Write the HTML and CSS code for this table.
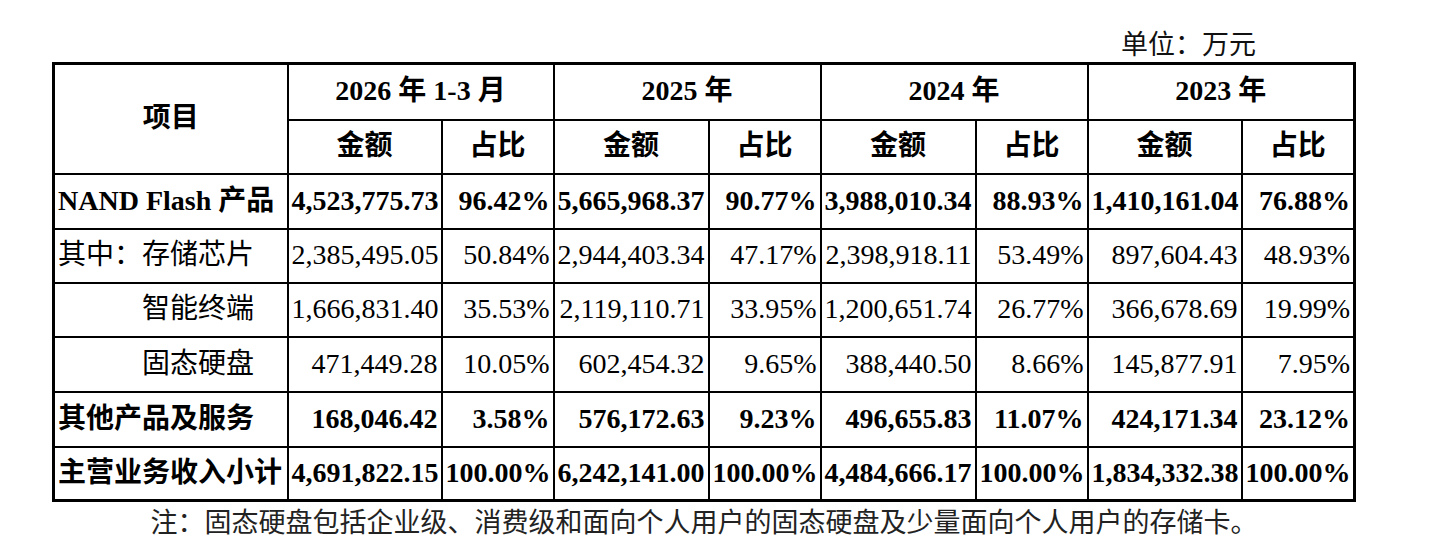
FILE: index.html
```html
<!DOCTYPE html>
<html lang="zh-CN">
<head>
<meta charset="utf-8">
<title>主营业务收入构成</title>
<link rel="stylesheet" href="styles.css">
</head>
<body>
<div class="page">
  <div class="unit-line"><span class="unit">单位：万元</span></div>
  <table class="report">
    <colgroup>
      <col class="c-item">
      <col class="c-amt"><col class="c-pct">
      <col class="c-amt2"><col class="c-pct">
      <col class="c-amt2"><col class="c-pct">
      <col class="c-amt"><col class="c-pct-last">
    </colgroup>
    <thead>
      <tr class="h1">
        <th rowspan="2">项目</th>
        <th colspan="2">2026 年 1-3 月</th>
        <th colspan="2">2025 年</th>
        <th colspan="2">2024 年</th>
        <th colspan="2">2023 年</th>
      </tr>
      <tr class="h2">
        <th>金额</th><th>占比</th>
        <th>金额</th><th>占比</th>
        <th>金额</th><th>占比</th>
        <th>金额</th><th>占比</th>
      </tr>
    </thead>
    <tbody>
      <tr class="r1 bold">
        <td class="name">NAND Flash 产品</td>
        <td class="num">4,523,775.73</td><td class="num">96.42%</td>
        <td class="num">5,665,968.37</td><td class="num">90.77%</td>
        <td class="num">3,988,010.34</td><td class="num">88.93%</td>
        <td class="num">1,410,161.04</td><td class="num">76.88%</td>
      </tr>
      <tr class="r2">
        <td class="name">其中：存储芯片</td>
        <td class="num">2,385,495.05</td><td class="num">50.84%</td>
        <td class="num">2,944,403.34</td><td class="num">47.17%</td>
        <td class="num">2,398,918.11</td><td class="num">53.49%</td>
        <td class="num">897,604.43</td><td class="num">48.93%</td>
      </tr>
      <tr class="r3">
        <td class="name sub">智能终端</td>
        <td class="num">1,666,831.40</td><td class="num">35.53%</td>
        <td class="num">2,119,110.71</td><td class="num">33.95%</td>
        <td class="num">1,200,651.74</td><td class="num">26.77%</td>
        <td class="num">366,678.69</td><td class="num">19.99%</td>
      </tr>
      <tr class="r4">
        <td class="name sub">固态硬盘</td>
        <td class="num">471,449.28</td><td class="num">10.05%</td>
        <td class="num">602,454.32</td><td class="num">9.65%</td>
        <td class="num">388,440.50</td><td class="num">8.66%</td>
        <td class="num">145,877.91</td><td class="num">7.95%</td>
      </tr>
      <tr class="r5 bold">
        <td class="name">其他产品及服务</td>
        <td class="num">168,046.42</td><td class="num">3.58%</td>
        <td class="num">576,172.63</td><td class="num">9.23%</td>
        <td class="num">496,655.83</td><td class="num">11.07%</td>
        <td class="num">424,171.34</td><td class="num">23.12%</td>
      </tr>
      <tr class="r6 bold">
        <td class="name">主营业务收入小计</td>
        <td class="num">4,691,822.15</td><td class="num">100.00%</td>
        <td class="num">6,242,141.00</td><td class="num">100.00%</td>
        <td class="num">4,484,666.17</td><td class="num">100.00%</td>
        <td class="num">1,834,332.38</td><td class="num">100.00%</td>
      </tr>
    </tbody>
  </table>
  <p class="note">注：固态硬盘包括企业级、消费级和面向个人用户的固态硬盘及少量面向个人用户的存储卡。</p>
</div>
</body>
</html>
```

FILE: styles.css
```css
html, body {
  margin: 0;
  padding: 0;
  background: #ffffff;
}

body {
  font-family: "Liberation Serif", "Noto Sans CJK SC", serif;
  color: #000000;
}

.page {
  width: 1304px;
  padding-left: 52px;
}

.unit-line {
  height: 62px;
  display: flex;
  justify-content: flex-end;
  align-items: flex-end;
  padding-right: 100px;
}

.unit {
  font-family: "Noto Sans CJK SC", sans-serif;
  font-size: 27px;
  line-height: 1;
  padding-bottom: 6px;
  color: #111;
}

.report {
  width: 1304px;
  table-layout: fixed;
  border-collapse: collapse;
  border: 3px solid #000;
  font-size: 28px;
}

.c-item { width: 234px; }
.c-amt { width: 154px; }
.c-amt2 { width: 155px; }
.c-pct { width: 112px; }
.c-pct-last { width: 113px; }

.report th,
.report td {
  border: 2px solid #000;
  padding: 0 3px;
  line-height: 1.1;
  vertical-align: middle;
  white-space: nowrap;
  overflow: hidden;
}

.report th {
  font-weight: 700;
  text-align: center;
}

.h1 { height: 56px; }
.h2 { height: 54px; }
.r1 { height: 55px; }
.r2 { height: 54px; }
.r3 { height: 54px; }
.r4 { height: 55px; }
.r5 { height: 55px; }
.r6 { height: 54px; }

.report td {
  font-weight: 400;
}

.bold td {
  font-weight: 700;
}

.name {
  text-align: left;
}

.name.sub {
  padding-left: 87px;
}

.num {
  text-align: right;
}

.note {
  margin: 3px 0 0;
  text-align: center;
  font-family: "Noto Sans CJK SC", sans-serif;
  font-size: 27px;
  line-height: 1.2;
  color: #222;
}
```
